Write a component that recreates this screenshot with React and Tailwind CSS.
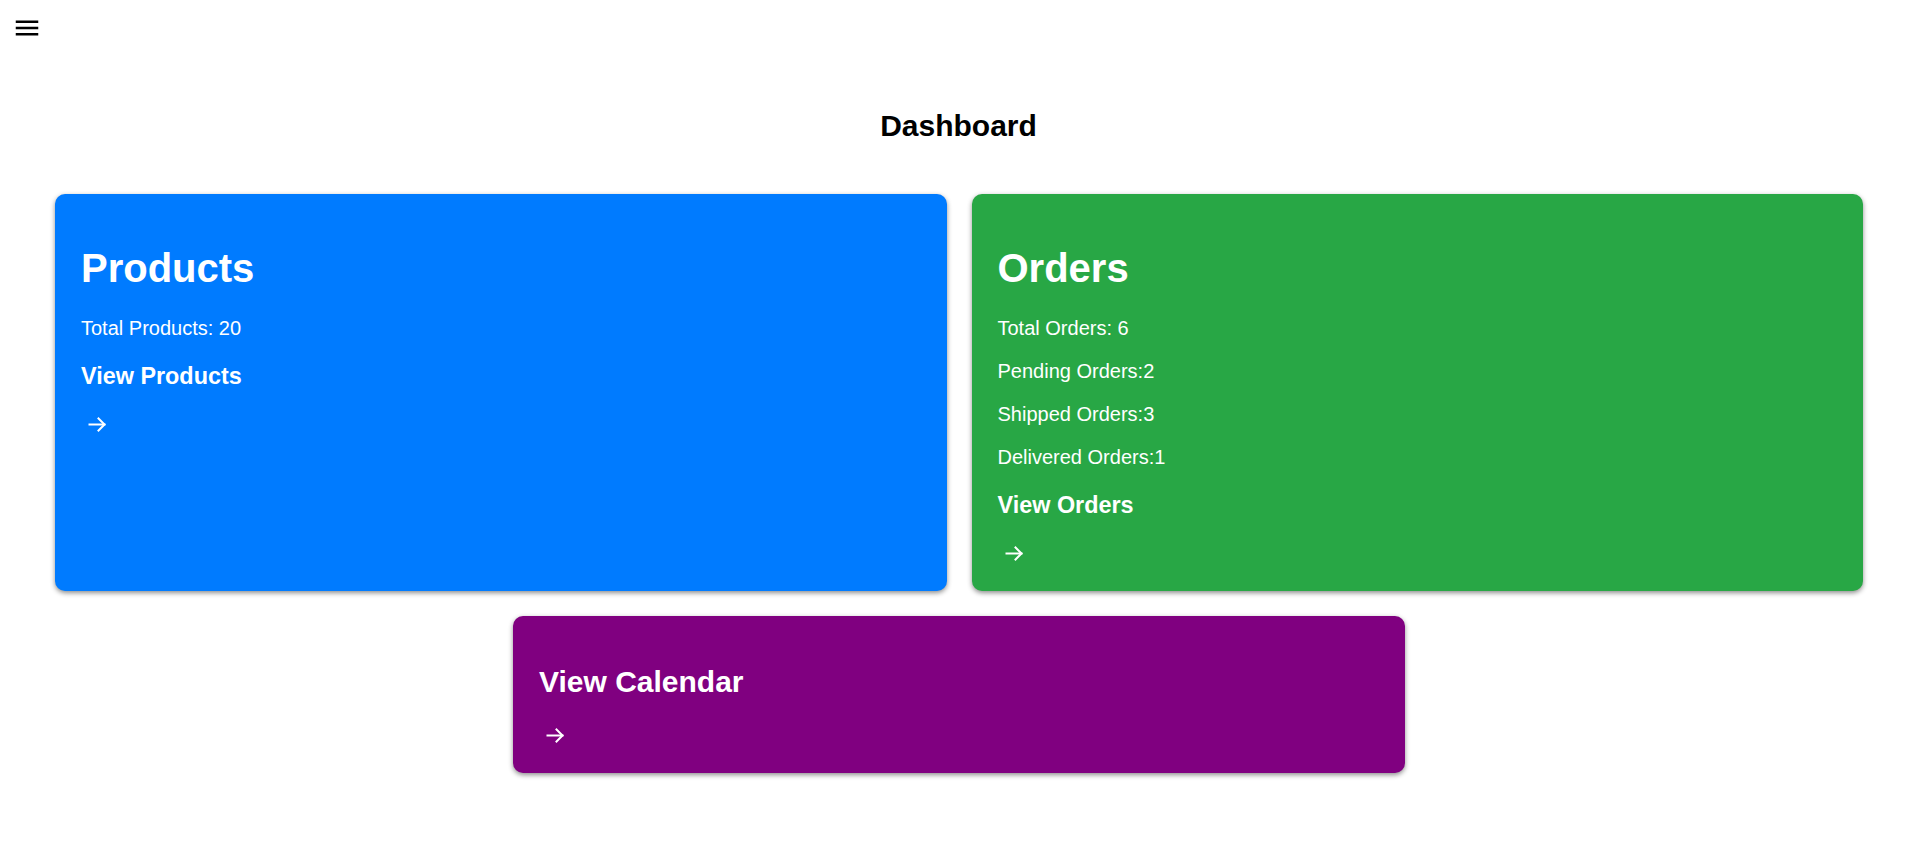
import React from 'react';

const ORDER_STATS = [
  { label: 'Total Orders: ', value: 6 },
  { label: 'Pending Orders:', value: 2 },
  { label: 'Shipped Orders:', value: 3 },
  { label: 'Delivered Orders:', value: 1 },
];

function MenuIcon() {
  return (
    <svg width="30" height="30" viewBox="0 0 24 24" fill="#000">
      <path d="M3 18h18v-2H3v2zm0-5h18v-2H3v2zm0-7v2h18V6H3z" />
    </svg>
  );
}

// small arrow under each card's link
function Arrow({ className = 'mt-[19px]' }) {
  return (
    <div className={`${className} h-[30px] flex items-center pl-[7px]`}>
      <svg width="19" height="15" viewBox="0 0 19 15" fill="none" stroke="#fff" strokeWidth="2" strokeLinecap="square">
        <path d="M1.5 7.5h15" />
        <path d="M10.5 1.5l6 6-6 6" />
      </svg>
    </div>
  );
}

function ViewLink({ children }) {
  return (
    <div className="mt-[23px] text-[23.4px] leading-[27px] font-bold">{children}</div>
  );
}

export default function App() {
  return (
    <div
      className="min-h-screen bg-white text-black"
      style={{ fontFamily: '"Liberation Sans", Arial, sans-serif' }}
    >
      {/* Top bar */}
      <div className="h-[43px] pt-[13px] pl-[12px]">
        <button className="block w-[30px] h-[30px]">
          <MenuIcon />
        </button>
      </div>

      <h2 className="mt-[66px] text-center text-[30px] leading-[34px] font-bold">Dashboard</h2>

      <div className="mt-[51px] pl-[55px] pr-[54px]">
        {/* Products + Orders */}
        <div className="grid grid-cols-2 gap-[25px]">
          <div className="rounded-[10px] bg-[#007bff] text-white pl-[26px] pr-[25px] pt-[25px] pb-[23px] shadow-[0_2px_5px_rgba(0,0,0,0.45)]">
            <h1 className="mt-[26px] text-[40px] leading-[46px] font-bold">Products</h1>
            <p className="mt-[26px] text-[20px] leading-[23px]">Total Products: 20</p>
            <ViewLink>View Products</ViewLink>
            <Arrow />
          </div>

          <div className="rounded-[10px] bg-[#28a745] text-white pl-[26px] pr-[25px] pt-[25px] pb-[23px] shadow-[0_2px_5px_rgba(0,0,0,0.45)]">
            <h1 className="mt-[26px] text-[40px] leading-[46px] font-bold">Orders</h1>
            <div className="mt-[26px] flex flex-col gap-[20px]">
              {ORDER_STATS.map(s => (
                <p key={s.label} className="text-[20px] leading-[23px] whitespace-pre">
                  {s.label}{s.value}
                </p>
              ))}
            </div>
            <ViewLink>View Orders</ViewLink>
            <Arrow />
          </div>
        </div>

        {/* Calendar */}
        <div className="mt-[25px] mx-auto w-[892px] rounded-[10px] bg-[#800080] text-white pl-[26px] pr-[25px] pt-[25px] pb-[23px] shadow-[0_2px_5px_rgba(0,0,0,0.45)]">
          <h2 className="mt-[24px] text-[30px] leading-[34px] font-bold">View Calendar</h2>
          <Arrow className="mt-[21px]" />
        </div>
      </div>
    </div>
  );
}
